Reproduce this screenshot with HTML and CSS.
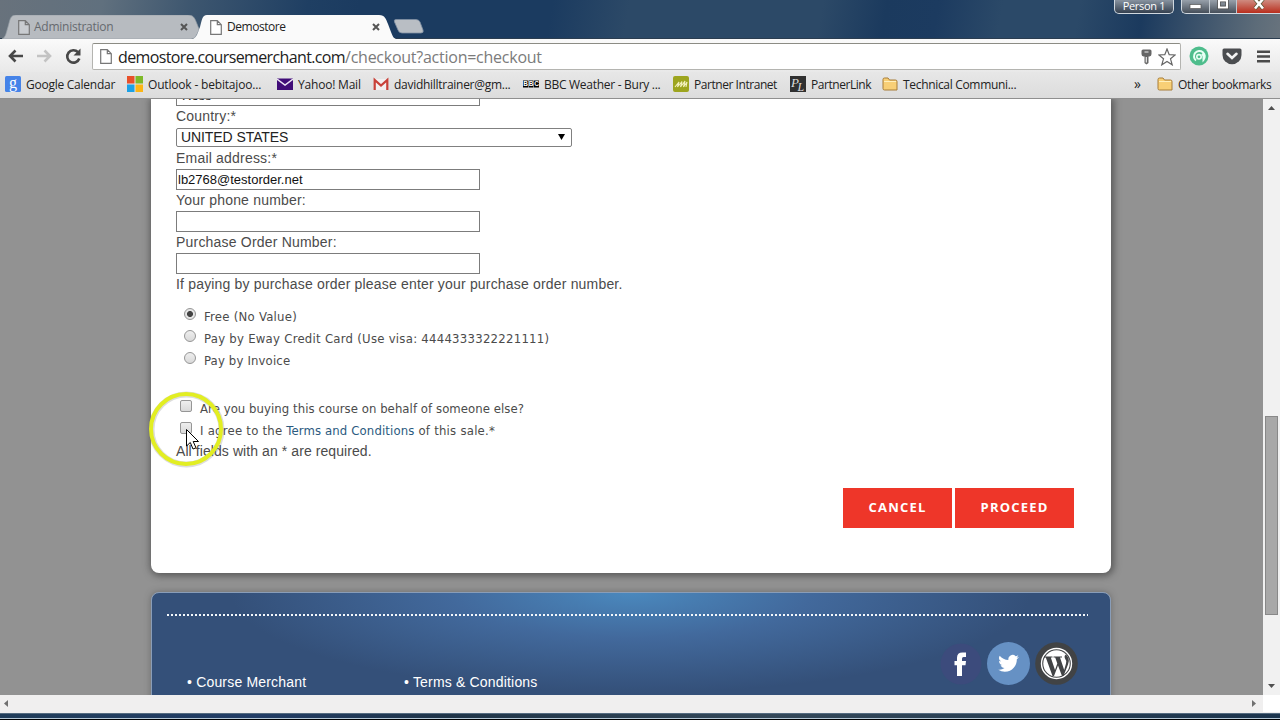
FILE: index.html
```html
<!DOCTYPE html>
<html lang="en">
<head>
<meta charset="utf-8">
<title>Demostore</title>
<link rel="stylesheet" href="styles.css">
</head>
<body>
<div class="window">
  <header class="titlebar">
    <div class="tab tab-idle">
      <svg class="tab-shape" width="198" height="24" viewBox="0 0 198 24"><path d="M0 24C4 22 4 18 6 12C8 5 8 0 14 0H186C192 0 193 4 195 9L197 14C195 20 193 24 189 24Z" fill="#b7bbc0" stroke="#98a0a8" stroke-width=".7"/></svg>
      <svg class="doc" viewBox="0 0 12 15"><path d="M.7.7H7.3L11.3 4.7V14.3H.7Z M7.3.7V4.7H11.3" /></svg>
      <span class="tab-title t-admin">Administration</span>
      <svg class="close" viewBox="0 0 8 8"><path d="M1 1L7 7M7 1L1 7"/></svg>
    </div>
    <div class="tab tab-active">
      <svg class="tab-shape" width="206" height="24" viewBox="0 0 206 24"><path d="M0 24C4 22 5 17 7 12C9 5 9 0 14 0H186C192 0 193 4 195 9L198 17C200 22 201 24 204 24Z" fill="#fafafa"/></svg>
      <svg class="doc" viewBox="0 0 12 15"><path d="M.7.7H7.3L11.3 4.7V14.3H.7Z M7.3.7V4.7H11.3" /></svg>
      <span class="tab-title t-demo">Demostore</span>
      <svg class="close" viewBox="0 0 8 8"><path d="M1 1L7 7M7 1L1 7"/></svg>
    </div>
    <svg class="newtab" width="31" height="15" viewBox="0 0 31 15"><path d="M3 .5H23Q26 .5 27 3L30 11Q31 14 28 14H9Q6 14 5 11L1.500 3Q.5.5 3 .5Z" fill="#b9bec4" stroke="#8291a3" stroke-width=".8"/></svg>
    <div class="controls">
      <div class="person">Person 1</div>
      <div class="winbtns">
        <span class="wb"><svg width="14" height="14"><rect x="2" y="4.500" width="11" height="4" fill="#fff" stroke="#555" stroke-width=".7"/></svg></span>
        <span class="wb"><svg width="14" height="14"><path d="M3 .5H11V7.500H3Z" fill="none" stroke="#444" stroke-width="3.600"/><path d="M3 .5H11V7.500H3Z" fill="none" stroke="#fff" stroke-width="2.200"/></svg></span>
        <span class="wb wb-close"><svg width="14" height="14"><path d="M3 -1L11 8.500M11 -1L3 8.500" stroke="#553" stroke-width="4"/><path d="M3 -1L11 8.500M11 -1L3 8.500" stroke="#fff" stroke-width="2.600"/></svg></span>
      </div>
    </div>
  </header>

  <div class="toolbar">
    <svg class="nav" width="84" height="20" viewBox="0 0 84 20">
      <path d="M17 10H4M9.500 4.500L4 10L9.500 15.500" fill="none" stroke="#484848" stroke-width="2.600"/>
      <path d="M31 10H44M38.500 4.500L44 10L38.500 15.500" fill="none" stroke="#c3c3c3" stroke-width="2.600"/>
      <path d="M72 6.200A6.200 6.200 0 1 0 73.300 12.500" fill="none" stroke="#484848" stroke-width="2.600"/><path d="M74.500 2.500V9.500H67.500Z" fill="#484848"/>
    </svg>
    <div class="omnibox">
      <svg class="doc" viewBox="0 0 12 15"><path d="M.7.7H7.3L11.3 4.7V14.3H.7Z M7.3.7V4.7H11.3" /></svg>
      <span class="url"><b>demostore.coursemerchant.com</b>/checkout?action=checkout</span>
      <svg width="11" height="16" viewBox="0 0 11 16"><path d="M2 .5H9Q10.500.5 10.500 2V5Q10.500 7 8.500 7.500H7.500V14L5.500 15.500L3.500 14V7.500H2.500Q.5 7 .5 5V2Q.5.5 2 .5Z" fill="#666"/><path d="M3.500 3H7.500M5.300 8V13.500" stroke="#eee" stroke-width="1.200"/></svg>
      <svg class="star" width="18" height="18" viewBox="0 0 18 18"><path d="M9 1L11.200 6.700L17.200 7L12.500 10.800L14.200 16.800L9 13.400L3.800 16.800L5.500 10.800L.8 7L6.800 6.700Z" fill="#fff" stroke="#666" stroke-width="1.200"/></svg>
    </div>
    <svg class="ext-a" width="20" height="20" viewBox="0 0 20 20"><circle cx="10" cy="10" r="9.500" fill="#4ebd8c"/><path d="M7 14.500A5.400 5.400 0 1 1 14.500 13.800V10.500A4 3.500 0 0 0 12.800 8" fill="none" stroke="#e8fff4" stroke-width="2"/><circle cx="10" cy="10.800" r="2.200" fill="none" stroke="#e8fff4" stroke-width="1.600"/></svg>
    <svg class="ext-p" width="20" height="17" viewBox="0 0 20 17"><path d="M2 .5H18Q19.500.5 19.500 2V7A9.500 9.200 0 0 1 .5 7V2Q.5.5 2 .5Z" fill="#4b4d50"/><path d="M5.500 5.800L10 10L14.500 5.800" fill="none" stroke="#f3f3f3" stroke-width="2.600" stroke-linecap="round"/></svg>
    <svg width="13" height="13" viewBox="0 0 13 13"><path d="M0 1.700H13M0 6.500H13M0 11.300H13" stroke="#4a4a4a" stroke-width="2.600"/></svg>
  </div>

  <nav class="bookmarks">
    <a class="bm"><svg width="16" height="16"><rect width="16" height="16" rx="1.500" fill="#4583e8"/><text x="8" y="12" text-anchor="middle" font-family="Liberation Serif" font-size="16" fill="#fff">g</text></svg><span class="b1">Google Calendar</span></a>
    <a class="bm"><svg width="16" height="16"><path d="M0 0H7.500V7.500H0Z" fill="#e8502a"/><path d="M8.500 0H16V7.500H8.500Z" fill="#7db928"/><path d="M0 8.500H7.500V16H0Z" fill="#1ba1e6"/><path d="M8.500 8.500H16V16H8.500Z" fill="#fbb515"/></svg><span class="b2">Outlook - bebitajoo...</span></a>
    <a class="bm"><svg width="16" height="16"><path d="M0 2.500H16V14H0Z" fill="#400c78"/><path d="M0 3L8 9L16 3" fill="none" stroke="#ece3f5" stroke-width="1.400"/></svg><span class="b3">Yahoo! Mail</span></a>
    <a class="bm"><svg width="16" height="16"><path d="M1 3H15V14H1Z" fill="#f3f0f0"/><path d="M1.700 14V4L8 9.500L14.300 4V14" fill="none" stroke="#c94139" stroke-width="2.200"/></svg><span class="b4">davidhilltrainer@gm...</span></a>
    <a class="bm"><svg width="16" height="16"><path d="M0 4.500H5V11.500H0ZM5.500 4.500H10.500V11.500H5.500ZM11 4.500H16V11.500H11Z" fill="#000"/><text y="10.300" font-family="Liberation Sans" font-weight="bold" font-size="6.500" fill="#fff"><tspan x=".2">B</tspan><tspan x="5.700">B</tspan><tspan x="11.200">C</tspan></text></svg><span class="b5">BBC Weather - Bury ...</span></a>
    <a class="bm"><svg width="16" height="16"><rect width="16" height="16" rx="2" fill="#9da51f"/><path d="M2 11L6 6L4.500 11L9 5.500L7.500 11L12 5L10.500 11L14 6L13 11" fill="none" stroke="#f2f0bd" stroke-width="1.100"/></svg><span class="b6">Partner Intranet</span></a>
    <a class="bm"><svg width="16" height="16"><rect width="16" height="16" fill="#303030"/><text x="1" y="11" font-family="Liberation Serif" font-style="italic" font-size="13" fill="#ddd">P</text><text x="7.500" y="15" font-family="Liberation Serif" font-style="italic" font-size="12" fill="#ddd">L</text></svg><span class="b7">PartnerLink</span></a>
    <a class="bm"><svg class="folder" width="16" height="16" viewBox="0 0 16 16"><path d="M1 3.500Q1 2 2.500 2H6L7.500 4H13.500Q15 4 15 5.500V14H2.500Q1 14 1 12.500Z" fill="#f8cf76" stroke="#a77c38"/><path d="M2 5.500H14" stroke="#fff0bd"/></svg><span class="b8">Technical Communi...</span></a>
    <span class="more">»</span>
    <a class="bm other"><svg class="folder" width="16" height="16" viewBox="0 0 16 16"><path d="M1 3.500Q1 2 2.500 2H6L7.500 4H13.500Q15 4 15 5.500V14H2.500Q1 14 1 12.500Z" fill="#f8cf76" stroke="#a77c38"/><path d="M2 5.500H14" stroke="#fff0bd"/></svg><span class="b9">Other bookmarks</span></a>
  </nav>

  <div class="viewport">
    <main class="page">
      <section class="card">
        <div class="field clipped">Ross</div>
        <div class="label">Country:*</div>
        <div class="select"><span>UNITED STATES</span><svg width="7" height="6"><path d="M0 0H7L3.500 6Z"/></svg></div>
        <div class="label">Email address:*</div>
        <div class="field">lb2768@testorder.net</div>
        <div class="label">Your phone number:</div>
        <div class="field"></div>
        <div class="label">Purchase Order Number:</div>
        <div class="field"></div>
        <div class="label paying">If paying by purchase order please enter your purchase order number.</div>
        <div class="radios">
          <div class="opt"><i class="radio on"></i><span class="r1">Free (No Value)</span></div>
          <div class="opt"><i class="radio"></i><span class="r2">Pay by Eway Credit Card (Use visa: 4444333322221111)</span></div>
          <div class="opt"><i class="radio"></i><span class="r3">Pay by Invoice</span></div>
        </div>
        <div class="checks">
          <div class="opt"><i class="check"></i><span class="c1">Are you buying this course on behalf of someone else?</span></div>
          <div class="opt"><i class="check"></i><span class="c2">I agree to the <a>Terms and Conditions</a> of this sale.*</span></div>
        </div>
        <div class="label required">All fields with an * are required.</div>
        <div class="actions"><div class="btn cancel">CANCEL</div><div class="btn proceed">PROCEED</div></div>
      </section>
      <footer class="footer">
        <div class="dots"></div>
        <div class="social">
          <svg width="42" height="42"><circle cx="21" cy="21" r="20.500" fill="#3c4b7c"/><path d="M26 9.500V14H23.500Q22 14 22 15.700V18H26L25.500 22.300H22V33H17V22.300H14.500V18H17V14.800Q17 9.500 22.500 9.500Z" fill="#fff"/></svg>
          <svg width="43" height="43"><circle cx="21.500" cy="21.500" r="21.500" fill="#6691c4"/><path transform="translate(11.300 11) scale(.86)" fill="#fff" d="M23.950 4.570a10 10 0 0 1-2.820.770 4.960 4.960 0 0 0 2.160-2.720c-.95.550-2 .960-3.130 1.180a4.920 4.920 0 0 0-8.380 4.480C7.690 8.090 4.070 6.130 1.640 3.160a4.920 4.920 0 0 0 1.520 6.570 4.900 4.900 0 0 1-2.230-.61v.06a4.920 4.920 0 0 0 3.950 4.830 5 5 0 0 1-2.210.080 4.940 4.940 0 0 0 4.600 3.420A9.870 9.870 0 0 1 0 19.540a13.990 13.990 0 0 0 7.550 2.210c9.050 0 14-7.500 14-13.980 0-.21 0-.42-.02-.63a9.940 9.940 0 0 0 2.460-2.550z"/></svg>
          <svg width="43" height="43"><circle cx="21.500" cy="21.500" r="21.300" fill="#414345"/><circle cx="21.500" cy="21.500" r="15" fill="#414345" stroke="#fff" stroke-width="1.400"/><circle cx="21.500" cy="21.500" r="13.200" fill="#fff"/><path d="M9 14.500H17.500V15.500H15.800L20 28L22.300 21.500L20.200 15.500H18.500V14.500H27V15.500H25L29.200 28L31 21.500Q31.800 18.500 30 16.500Q28.800 13.500 31 12.500L33.500 16Q34.500 19 33 22.500L28.500 34H27L23 23.500L19 34H17.500L10.800 15.500H9Z" fill="#414345"/></svg>
        </div>
        <div class="links"><span>• Course Merchant</span><span>• Terms &amp; Conditions</span></div>
      </footer>
    </main>
    <div class="vscroll"><svg width="7" height="4"><path d="M0 4L3.500 0L7 4Z" fill="#505050"/></svg><div class="thumb"></div><svg width="7" height="4"><path d="M0 0L3.500 4L7 0Z" fill="#505050"/></svg></div>
  </div>
  <div class="hscroll"><svg width="4" height="7"><path d="M4 0L0 3.500L4 7Z" fill="#707070"/></svg><svg width="4" height="7"><path d="M0 0L4 3.500L0 7Z" fill="#707070"/></svg><i></i></div>
  <div class="frame-bottom"></div>
  <svg class="pointer" width="84" height="84" viewBox="0 0 84 84"><circle cx="40.500" cy="41.500" r="35" fill="none" stroke="#777" stroke-opacity=".25" stroke-width="6"/><circle cx="40" cy="41" r="35" fill="none" stroke="#e2ee22" stroke-width="4"/><path d="M40.500 41.500V58L44.300 54.500L47 61L50 59.800L47.200 53.500H52.500Z" fill="#fff" stroke="#000"/></svg>
</div>
</body>
</html>
```

FILE: styles.css
```css
* { box-sizing: border-box; }
body { margin: 0; font-family: "Liberation Sans", sans-serif; }
svg { display: block; flex: none; }
.window { position: relative; width: 1280px; height: 720px; overflow: hidden; display: flex; flex-direction: column; }

.titlebar { height: 39px; flex: none; display: flex; align-items: flex-end; padding-left: 2px; background: linear-gradient(100deg, #68727c 0, #60707e 8%, #3d566f 15%, #1f3f63 24%, #1b3b60 28%, #1b3b60 43%, #2c4967 49%, #2c4967 64%, #1b3a5e 69%, #1c3b60 73%, #2b4968 78%, #2b4968 84%, #1b3a5e 89%, #5d6c79 98%, #68737d 100%); border-bottom: 1px solid #2b3d50; }
.tab { position: relative; height: 24px; display: flex; align-items: center; font: 12px "Open Sans", sans-serif; margin-bottom: -1px; }
.tab > * { position: relative; }
.tab .tab-shape { position: absolute; left: 0; top: 0; }
.tab-idle { width: 191px; padding-left: 16px; color: #666a6f; }
.tab-active { width: 206px; padding-left: 17px; color: #222; z-index: 1; }
.tab-title { margin-left: 5px; width: 145px; padding-bottom: 1px; white-space: nowrap; }
.tab-idle .tab-title { margin-left: 4px; width: 146px; }
.t-admin { letter-spacing: -.25px; }
.t-demo { letter-spacing: -.45px; }
.doc { width: 12px; height: 15px; fill: #fff; stroke: #777; stroke-width: 1.200; }
.tab-idle .doc { fill: #c9ccd0; }
.close { width: 8px; height: 8px; stroke: #555; stroke-width: 2; }
.newtab { margin: 0 0 4px -6px; }
.controls { margin-left: auto; align-self: flex-start; display: flex; gap: 7px; }
.person { width: 60px; height: 14px; border: 1px solid #d0d8df; border-top: 0; border-radius: 0 0 5px 5px; background: linear-gradient(#8893a0, #34404f); color: #fff; font: 11px/11px "Open Sans", sans-serif; letter-spacing: -.3px; text-align: center; white-space: nowrap; }
.winbtns { display: flex; width: 99px; height: 14px; border: 1px solid #d0d8df; border-top: 0; border-right: 0; border-radius: 0 0 0 5px; overflow: hidden; background: linear-gradient(#97a0aa, #464f5a); }
.wb { width: 28px; border-right: 1px solid #c0c8cf; display: flex; justify-content: center; }
.wb-close { width: 43px; border: 0; background: linear-gradient(#cf8b80, #b92e1d); }

.toolbar { height: 33px; flex: none; display: flex; align-items: center; padding: 1px 0 0 6px; background: linear-gradient(#fafafa, #e9e9e9); }
.nav { margin-right: 2px; }
.omnibox { width: 1089px; height: 27px; display: flex; align-items: center; margin-top: 1px; padding: 0 4px 0 7px; background: #fff; border: 1px solid #b4b4b0; border-top-color: #8c8c84; border-radius: 2px; }
.url { margin-left: 6px; flex: 1; font: 16px/24px "Open Sans", sans-serif; color: #7b7b7b; white-space: nowrap; letter-spacing: -.25px; }
.url b { font-weight: 400; color: #222; letter-spacing: -.63px; }
.star { margin-left: 6px; }
.ext-a { margin-left: 8px; }
.ext-p { margin: 0 15px 0 13px; }

.bookmarks { height: 27px; flex: none; display: grid; grid-template-columns: 122px 150px 96px 150px 150px 117px 92px 252px 23px 1fr; align-items: center; padding: 0 0 2px 5px; background: linear-gradient(#e7e7e7, #dcdcdc); border-bottom: 1px solid #8f8f8f; font: 12px "Open Sans", sans-serif; color: #222; }
.bm { display: flex; align-items: center; gap: 5px; white-space: nowrap; }
.b1 { letter-spacing: -.25px; }
.b2 { letter-spacing: -.18px; }
.b3 { letter-spacing: -.2px; }
.b4, .b5 { letter-spacing: -.28px; }
.b6, .b7 { letter-spacing: -.45px; }
.b8 { letter-spacing: -.32px; }
.b9 { letter-spacing: -.35px; }
.more { font-size: 14px; line-height: 20px; }

.viewport { height: 596px; flex: none; display: flex; }
.page { width: 1263px; padding-left: 151px; overflow: hidden; background: #929292; }
.card { width: 960px; height: 474px; padding: 0 37px 0 25px; background: #fff; border-radius: 0 0 8px 8px; box-shadow: 1px 1px 7px 2px rgba(60, 60, 60, .65); color: #4b4b4b; font-size: 14px; }
.field { width: 304px; height: 21px; border: 1px solid #7c7c7c; padding-left: 1px; line-height: 19px; font-size: 13px; color: #111; background: #fff; }
.clipped { position: relative; top: -14px; margin-bottom: -14px; padding-left: 5px; }
.label { height: 21px; line-height: 21px; white-space: nowrap; letter-spacing: .2px; }
.paying { letter-spacing: .18px; }
.required { letter-spacing: .08px; }
.select { width: 396px; height: 19px; margin: 1px 0; padding: 0 6px 2px 4px; display: flex; align-items: center; justify-content: space-between; border: 1px solid #808080; border-radius: 2px; font-size: 14px; letter-spacing: -.08px; color: #222; }
.radios { margin-top: 10px; padding-left: 8px; }
.checks { margin-top: 26px; padding-left: 4px; }
.opt { height: 22px; display: flex; align-items: center; gap: 8px; font: 13px "DejaVu Sans Condensed", "DejaVu Sans", sans-serif; white-space: nowrap; }
.r1, .r2 { letter-spacing: .26px; }
.r3 { letter-spacing: .15px; }
.c1 { letter-spacing: .06px; }
.c2 { letter-spacing: .24px; }
.opt a { color: #2b5a80; letter-spacing: .13px; }
.radio, .check { width: 12px; height: 12px; margin-top: -4px; border: 1px solid #969696; background: linear-gradient(#eee, #d9d9d9); }
.radio { border-radius: 50%; }
.on { background: radial-gradient(circle, #444 0 2.600px, #e6e6e6 3.400px); }
.check { border-radius: 2px; }
.actions { margin-top: 26px; display: flex; justify-content: flex-end; gap: 3px; }
.btn { height: 40px; background: #ee3629; color: #fff; font: bold 13px/38px "Open Sans", sans-serif; text-align: center; letter-spacing: 1.200px; }
.cancel { width: 109px; }
.proceed { width: 119px; }

.footer { width: 960px; height: 110px; margin-top: 19px; padding-top: 21px; border: 1px solid #899db8; border-radius: 8px 8px 0 0; background: radial-gradient(ellipse 400px 100px at 50% 0, #4a88bd 0, #42699c 45%, #345079 100%); box-shadow: 0 0 6px rgba(70, 70, 70, .5); }
.dots { width: 921px; height: 2px; margin-left: 15px; background: repeating-linear-gradient(90deg, #f4f8fc 0 2px, transparent 2px 4px); }
.social { display: flex; align-items: center; justify-content: flex-end; gap: 5px; margin: 26px 32px 0 0; height: 43px; }
.links { display: flex; margin-top: -12px; padding-left: 35px; color: #fff; font-size: 14px; line-height: 18px; letter-spacing: .18px; }
.links span { width: 217px; }

.vscroll { width: 17px; background: #f1f1f1; display: flex; flex-direction: column; align-items: center; padding: 7px 0; }
.thumb { width: 13px; height: 199px; margin: 306px 0 auto; background: #a8a8a8; border: 1px solid #888; }
.hscroll { height: 18px; flex: none; display: flex; align-items: center; justify-content: space-between; padding: 0 0 1px 4px; background: #f0efef; }
.hscroll svg + svg { margin-left: auto; margin-right: 7px; }
.hscroll i { width: 17px; height: 17px; background: #fff; }
.frame-bottom { height: 7px; background: linear-gradient(90deg, #203c59, #223d66 20%, #1f3448 35%, #344859 60%, #1b344d); border-top: 1px solid #556b80; border-bottom: 1px solid #000; box-shadow: inset 0 -1px #b4c6d4; }
.pointer { position: absolute; left: 146px; top: 388px; }
```
